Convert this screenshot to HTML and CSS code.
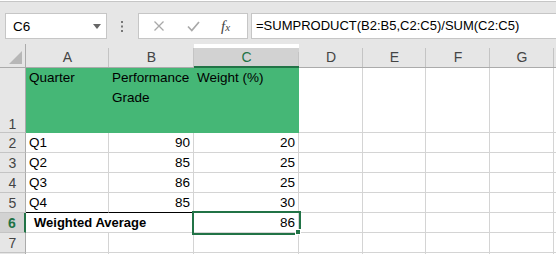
FILE: index.html
```html
<!DOCTYPE html>
<html lang="en">
<head>
    <meta charset="UTF-8">
    <meta name="viewport" content="width=device-width, initial-scale=1.0">
    <title>Weighted Average</title>
    <link rel="stylesheet" href="styles.css">
</head>
<body>

    <div class="toolbar">
        <div class="name-box">
            <span>C6</span>
            <svg class="caret" width="8" height="5" viewBox="0 0 8 5"><path d="M0 0h8L4 5z" fill="#666"/></svg>
        </div>
        <svg class="dots" width="3" height="12" viewBox="0 0 3 12">
            <rect x="0" y="0" width="2" height="2" fill="#777"/>
            <rect x="0" y="4.5" width="2" height="2" fill="#777"/>
            <rect x="0" y="9" width="2" height="2" fill="#777"/>
        </svg>
        <div class="fx-buttons">
            <svg width="12" height="12" viewBox="0 0 12 12"><path d="M1.5 1.5l9 9M10.5 1.5l-9 9" stroke="#a9a9a9" stroke-width="1.3" fill="none"/></svg>
            <svg width="13" height="11" viewBox="0 0 13 11"><path d="M1 5.5l3.8 4L12 1" stroke="#a9a9a9" stroke-width="1.7" fill="none"/></svg>
            <span class="fx">f<small>x</small></span>
        </div>
        <div class="formula">=SUMPRODUCT(B2:B5,C2:C5)/SUM(C2:C5)</div>
    </div>

    <div class="sheet">
        <div class="corner"><svg width="13" height="13" viewBox="0 0 13 13"><path d="M13 0V13H0z" fill="#b7b7b7"/></svg></div>
        <div class="col">A</div>
        <div class="col">B</div>
        <div class="col sel">C</div>
        <div class="col">D</div>
        <div class="col">E</div>
        <div class="col">F</div>
        <div class="col">G</div>
        <div class="col last"></div>

        <div class="row tall">1</div>
        <div class="cell head">Quarter</div>
        <div class="cell head">Performance Grade</div>
        <div class="cell head">Weight (%)</div>
        <div class="cell"></div><div class="cell"></div><div class="cell"></div><div class="cell"></div><div class="cell"></div>

        <div class="row">2</div>
        <div class="cell">Q1</div>
        <div class="cell num">90</div>
        <div class="cell num">20</div>
        <div class="cell"></div><div class="cell"></div><div class="cell"></div><div class="cell"></div><div class="cell"></div>

        <div class="row">3</div>
        <div class="cell">Q2</div>
        <div class="cell num">85</div>
        <div class="cell num">25</div>
        <div class="cell"></div><div class="cell"></div><div class="cell"></div><div class="cell"></div><div class="cell"></div>

        <div class="row">4</div>
        <div class="cell">Q3</div>
        <div class="cell num">86</div>
        <div class="cell num">25</div>
        <div class="cell"></div><div class="cell"></div><div class="cell"></div><div class="cell"></div><div class="cell"></div>

        <div class="row">5</div>
        <div class="cell ruled">Q4</div>
        <div class="cell num ruled">85</div>
        <div class="cell num">30</div>
        <div class="cell"></div><div class="cell"></div><div class="cell"></div><div class="cell"></div><div class="cell"></div>

        <div class="row sel">6</div>
        <div class="cell merged">Weighted Average</div>
        <div class="cell num active">86</div>
        <div class="cell"></div><div class="cell"></div><div class="cell"></div><div class="cell"></div><div class="cell"></div>

        <div class="row">7</div>
        <div class="cell"></div><div class="cell"></div><div class="cell"></div><div class="cell"></div>
        <div class="cell"></div><div class="cell"></div><div class="cell"></div><div class="cell"></div>

        <div class="row"></div>
        <div class="cell"></div><div class="cell"></div><div class="cell"></div><div class="cell"></div>
        <div class="cell"></div><div class="cell"></div><div class="cell"></div><div class="cell"></div>
    </div>

</body>
</html>
```

FILE: styles.css
```css
body {
    margin: 0;
    background-color: #fff;
    font-family: 'Liberation Sans', Arial, sans-serif;
    overflow: hidden;
}

/* formula bar */

.toolbar {
    height: 43px;
    background-color: #e6e6e6;
    border-top: 1px solid #c6c6c6;
    display: flex;
    align-items: flex-start;
    padding-top: 11px;
    box-sizing: border-box;
    margin-top: 1px;
}

.name-box {
    width: 102px;
    height: 26px;
    margin-left: 5px;
    box-sizing: border-box;
    background-color: #fff;
    border: 1px solid #c6c6c6;
    display: flex;
    align-items: center;
    justify-content: space-between;
    padding: 0 5px 0 7px;
    font-size: 13.5px;
    color: #000;
}

.caret {
    margin-top: 1px;
}

.dots {
    margin: 8px 0 0 14px;
}

.fx-buttons {
    width: 110px;
    height: 26px;
    margin-left: 14px;
    box-sizing: border-box;
    background-color: #fff;
    border: 1px solid #c6c6c6;
    display: flex;
    align-items: center;
    padding-left: 14px;
    gap: 22px;
}

.fx {
    font-family: 'Liberation Serif', serif;
    font-style: italic;
    font-size: 15px;
    color: #444;
    margin-left: -1px;
}

.fx small {
    font-size: 11px;
}

.formula {
    flex: 1;
    height: 26px;
    margin-left: 3px;
    box-sizing: border-box;
    background-color: #fff;
    border: 1px solid #c6c6c6;
    border-right: none;
    padding-left: 4px;
    font-size: 13px;
    line-height: 24px;
    color: #000;
}

/* grid */

.sheet {
    display: grid;
    grid-template-columns: 26px 83px 85px 105px 64px 63px 64px 64px 1fr;
    grid-template-rows: 24px 65px repeat(7, 20px);
    font-size: 13.5px;
}

.corner,
.col,
.row {
    background-color: #e6e6e6;
    color: #444;
    box-sizing: border-box;
}

.corner {
    border-right: 1px solid #ababab;
    border-bottom: 1px solid #ababab;
    display: flex;
    align-items: flex-end;
    justify-content: flex-end;
    padding: 0 3px 3px 0;
}

.col {
    border-bottom: 1px solid #ababab;
    display: flex;
    align-items: center;
    justify-content: center;
    padding-top: 3px;
    font-size: 14px;
    position: relative;
}

.col::after {
    content: '';
    position: absolute;
    right: 0;
    top: 4px;
    bottom: 0;
    width: 1px;
    background-color: #c4c4c4;
}

.col.last::after {
    display: none;
}

.col.sel {
    background-color: #d2d2d2;
    color: #217346;
    border-bottom: 2px solid #217346;
    margin-top: 4px;
    padding-top: 0;
}

.row {
    border-right: 1px solid #ababab;
    border-bottom: 1px solid #c4c4c4;
    display: flex;
    align-items: center;
    justify-content: center;
    font-size: 14px;
}

.row.tall {
    align-items: flex-end;
}

.row.sel {
    background-color: #d2d2d2;
    color: #217346;
    font-weight: bold;
    border-right: 2px solid #217346;
}

.cell {
    box-sizing: border-box;
    border-right: 1px solid #d4d4d4;
    border-bottom: 1px solid #d4d4d4;
    padding: 0 3px;
    line-height: 19px;
    white-space: nowrap;
    overflow: hidden;
    color: #000;
}

.cell.head {
    background-color: #45b776;
    border-color: #45b776;
    white-space: normal;
    line-height: 20px;
    padding-top: 0;
}

.cell.num {
    text-align: right;
}

.cell.ruled {
    border-bottom-color: #000;
}

.cell.merged {
    grid-column: span 2;
    font-weight: bold;
    padding-left: 8px;
    font-size: 13px;
}

.cell.active {
    position: relative;
    z-index: 1;
    overflow: visible;
    outline: 2px solid #217346;
}

.cell.active::after {
    content: '';
    position: absolute;
    right: -3px;
    bottom: -3px;
    width: 4px;
    height: 4px;
    background-color: #217346;
    border: 1px solid #fff;
}
```
